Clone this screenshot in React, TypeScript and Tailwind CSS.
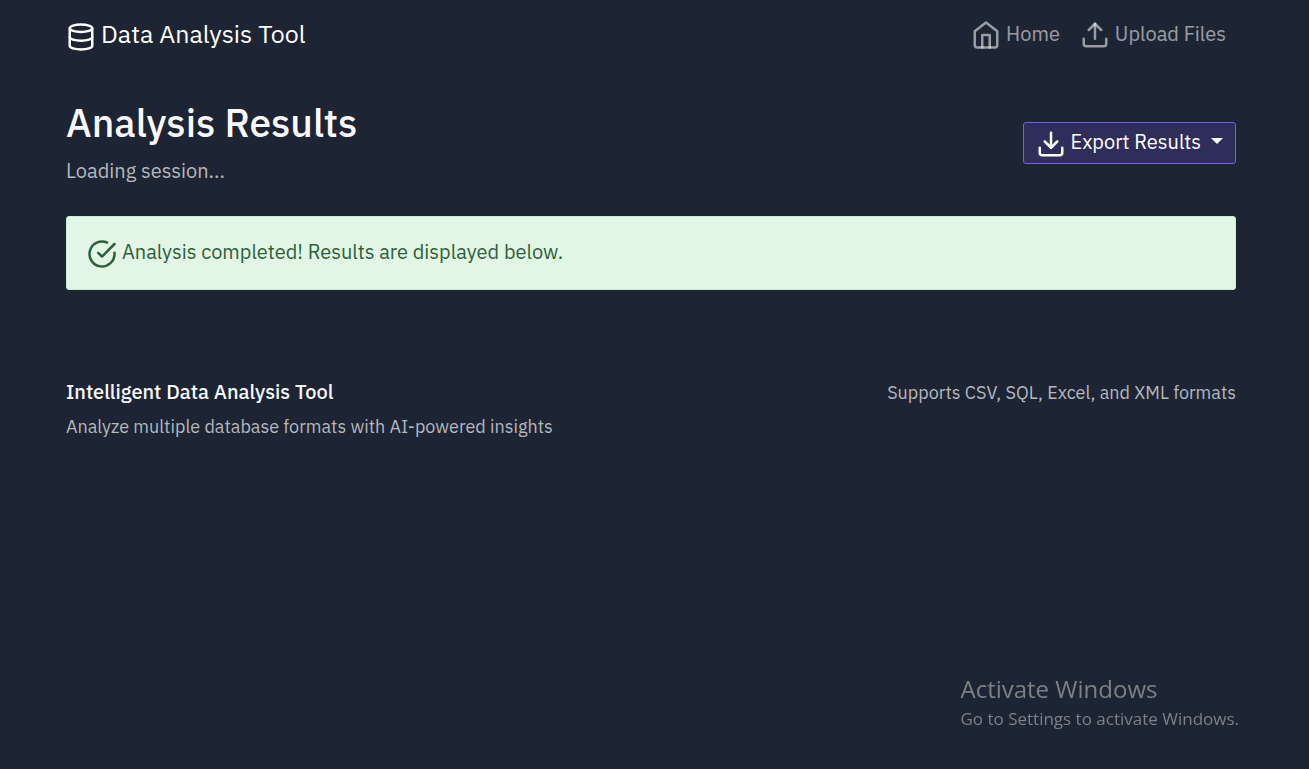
import React from "react";

function Icon({ className = "", children }: { className?: string; children: React.ReactNode }) {
  return (
    <svg
      viewBox="0 0 24 24"
      fill="none"
      stroke="currentColor"
      strokeWidth="2"
      strokeLinecap="round"
      strokeLinejoin="round"
      aria-hidden="true"
      className={`size-[30px] shrink-0 ${className}`}
    >
      {children}
    </svg>
  );
}

function Header() {
  return (
    <header className="flex h-[68px] items-center justify-between">
      <a href="#" className="flex items-center gap-[5px] text-[25px] leading-8 text-white">
        <Icon className="mt-[6px]">
          <ellipse cx="12" cy="5" rx="9" ry="3" />
          <path d="M21 12c0 1.66-4 3-9 3s-9-1.34-9-3" />
          <path d="M3 5v14c0 1.66 4 3 9 3s9-1.34 9-3V5" />
        </Icon>
        Data Analysis Tool
      </a>
      <nav className="flex items-center gap-5 pr-[10px] text-[20px] leading-8 text-white/55">
        <a href="#" className="flex items-center gap-[5px]">
          <Icon className="mt-[2px]">
            <path d="M3 9l9-7 9 7v11a2 2 0 0 1-2 2H5a2 2 0 0 1-2-2z" />
            <polyline points="9 22 9 12 15 12 15 22" />
          </Icon>
          Home
        </a>
        <a href="#" className="flex items-center gap-[5px]">
          <Icon className="mt-[2px]">
            <path d="M21 15v4a2 2 0 0 1-2 2H5a2 2 0 0 1-2-2v-4" />
            <polyline points="17 8 12 3 7 8" />
            <line x1="12" y1="3" x2="12" y2="15" />
          </Icon>
          Upload Files
        </a>
      </nav>
    </header>
  );
}

function Results() {
  return (
    <main className="pt-8">
      <div className="flex items-center justify-between">
        <div>
          <h1 className="text-[39px] leading-[46px] font-medium text-[#f8f9fc]">Analysis Results</h1>
          <p className="mt-[10px] text-[20px] leading-[30px] text-[#b5b8bd]">Loading session...</p>
        </div>
        <button
          type="button"
          className="flex h-[42px] items-center gap-[5px] rounded-[3px] border border-[#7460ee] bg-[#2f2e5b] px-3 pb-[2px] text-[20px] text-white"
        >
          <Icon className="mt-1">
            <path d="M21 15v4a2 2 0 0 1-2 2H5a2 2 0 0 1-2-2v-4" />
            <polyline points="7 10 12 15 17 10" />
            <line x1="12" y1="15" x2="12" y2="3" />
          </Icon>
          Export Results
          <span className="mb-[2px] ml-[5px] border-x-6 border-t-6 border-x-transparent border-t-white" />
        </button>
      </div>
      <div
        role="status"
        className="mt-[30px] flex h-[74px] items-center gap-[5px] rounded-[3px] border border-[#c9f0d0] bg-[#e1f6e5] px-5 pb-[2px] text-[20px] text-[#2d5f3a]"
      >
        <Icon className="mt-1">
          <path d="M22 11.08V12a10 10 0 1 1-5.93-9.14" />
          <polyline points="22 4 12 14.01 9 11.01" />
        </Icon>
        Analysis completed! Results are displayed below.
      </div>
    </main>
  );
}

function Footer() {
  return (
    <footer className="mt-[87px] flex items-start justify-between text-[18px] leading-[30px] text-[#b5b8bd]">
      <div>
        <h2 className="text-[20px] font-medium text-[#f8f9fc]">Intelligent Data Analysis Tool</h2>
        <p className="mt-[5px]">Analyze multiple database formats with AI-powered insights</p>
      </div>
      <p className="leading-8">Supports CSV, SQL, Excel, and XML formats</p>
    </footer>
  );
}

export default function App() {
  return (
    <div className="min-h-screen bg-[#1d2433] pr-[73px] pl-[66px] font-['IBM_Plex_Sans',Roboto,sans-serif]">
      <Header />
      <Results />
      <Footer />
      <aside className="pointer-events-none fixed right-[70px] bottom-9 font-['Segoe_UI','Open_Sans',sans-serif] text-[#7d8085]">
        <p className="text-[24px] leading-8">Activate Windows</p>
        <p className="text-[17px] leading-7">Go to Settings to activate Windows.</p>
      </aside>
    </div>
  );
}
